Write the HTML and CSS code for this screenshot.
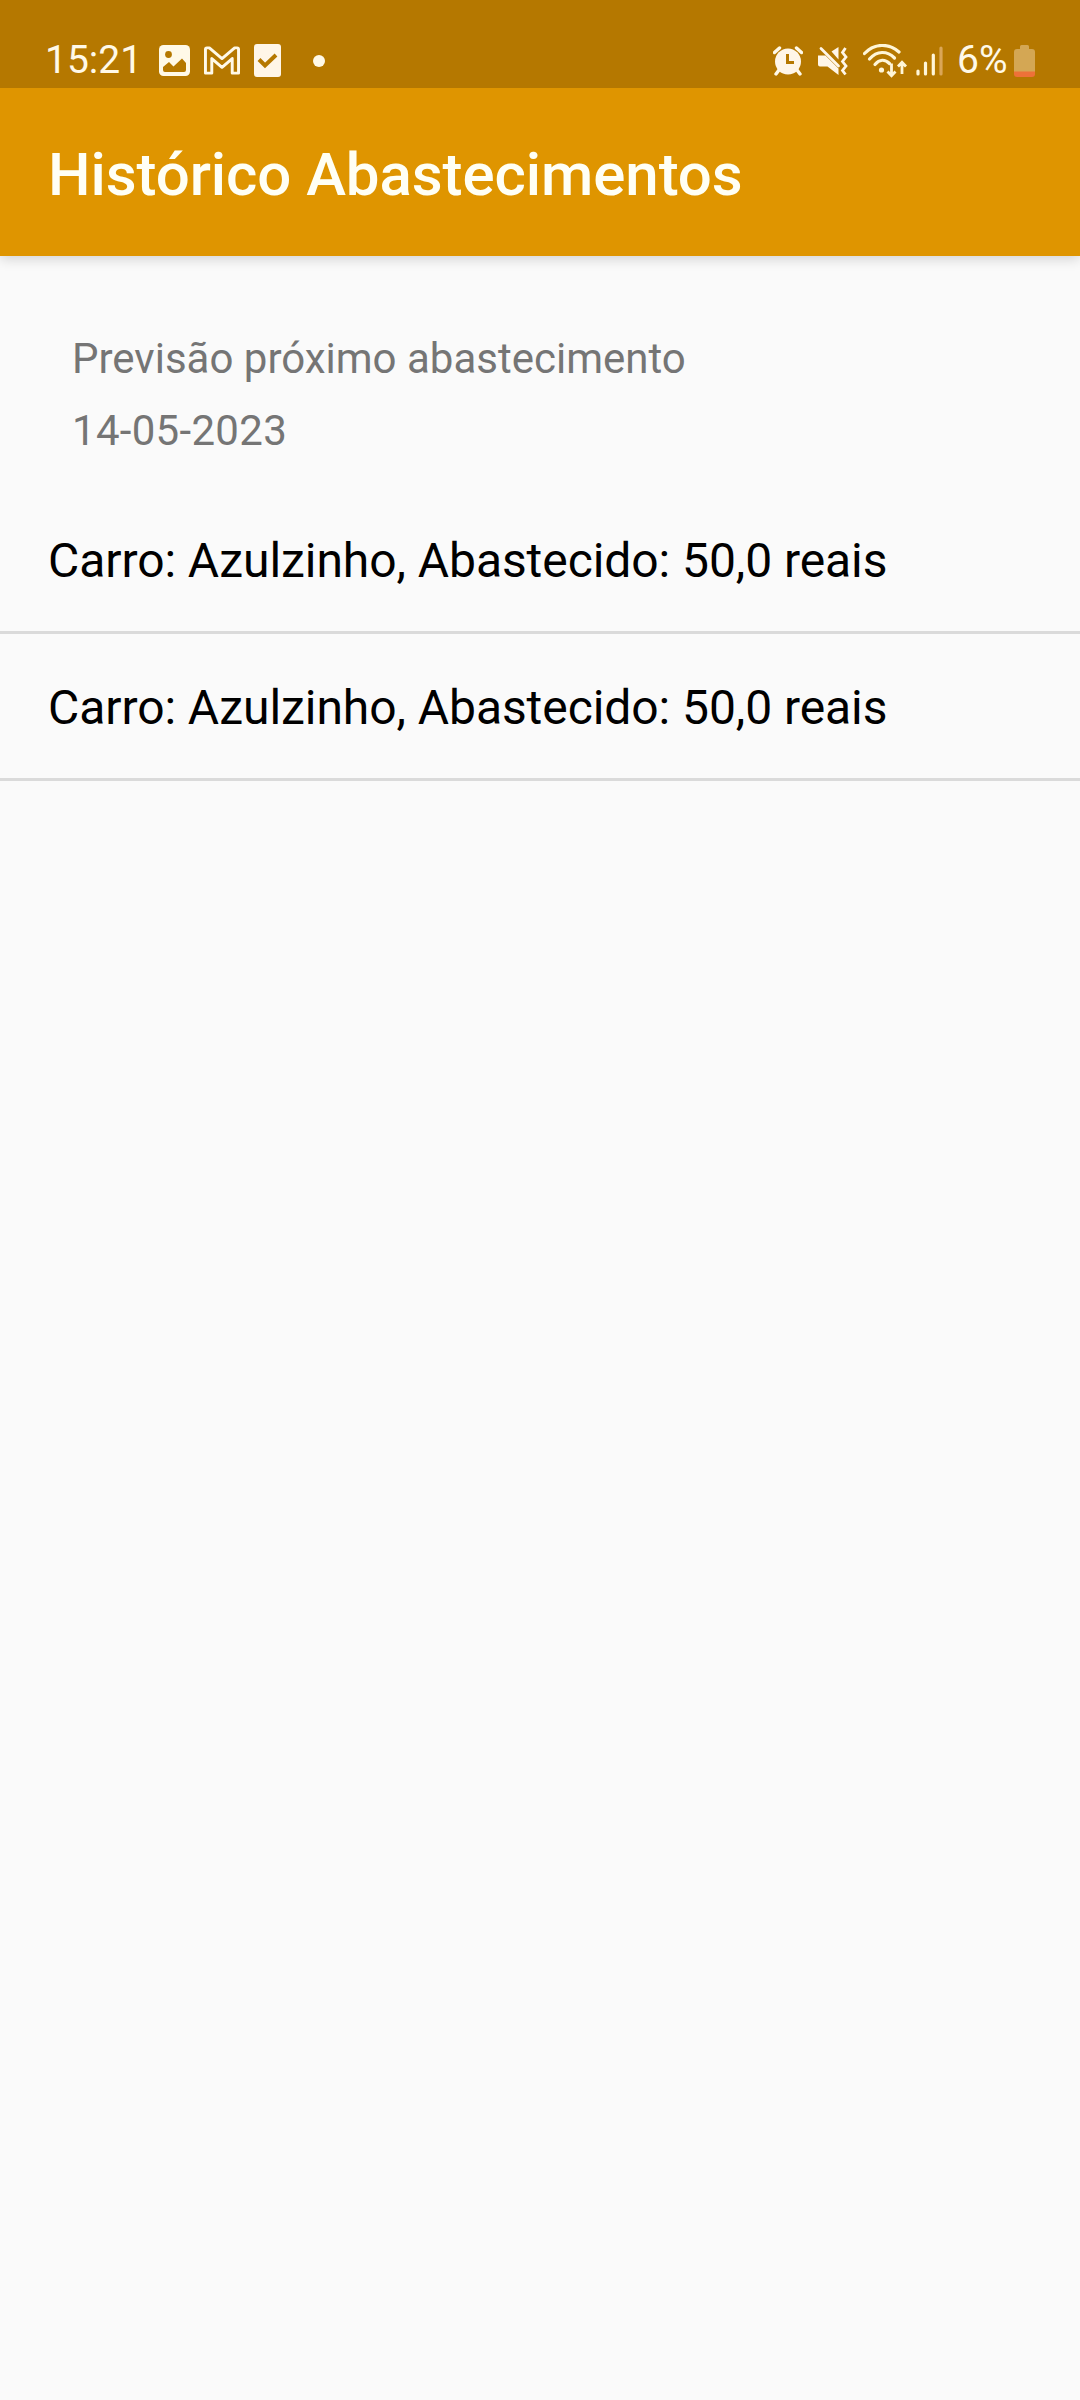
FILE: index.html
```
<!DOCTYPE html>
<html lang="pt-BR">

<head>
  <meta charset="utf-8">
  <title>Histórico Abastecimentos</title>
  <link rel="stylesheet" href="styles.css">
</head>

<body>
  <div class="status-bar">
    <span class="clock">15:21</span>
    <div class="notifications">
      <!-- gallery -->
      <svg width="31" height="31" viewBox="0 0 31 31">
        <rect width="31" height="31" rx="4.5" fill="#fff9e8"/>
        <circle cx="9.5" cy="9.5" r="3.4" fill="#b57800"/>
        <path d="M4 22L10 17l4.500 4.500 8.500-8L27 18v7q0 2-2 2H6q-2 0-2-2z" fill="#b57800"/>
      </svg>
      <!-- mail -->
      <svg width="36" height="29" viewBox="0 0 37 29">
        <path d="M1.500 3q0-1.500 1.500-1.500h2.500L18.500 12.500 31.500 1.500H34q1.500 0 1.500 1.500v24.500h-6.500V12.500L18.500 21.500 8 12.500v15H1.500z" fill="none" stroke="#fff9e8" stroke-width="3" stroke-linejoin="round"/>
      </svg>
      <!-- task -->
      <svg width="27" height="33" viewBox="0 0 27 33">
        <rect width="27" height="33" rx="3" fill="#fff6e8"/>
        <path d="M5 15.500l6 6L22 11" fill="none" stroke="#b57800" stroke-width="4"/>
      </svg>
    </div>
    <span class="more-dot"></span>
    <div class="system">
      <!-- alarm -->
      <svg width="30" height="30" viewBox="0 0 30 30">
        <path d="M1.500 6.500L6.500 2M28.500 6.500L23.500 2M6 24l-3 4M24 24l3 4" stroke="#fff9e8" stroke-width="3.400" stroke-linecap="round"/>
        <circle cx="15" cy="15.500" r="13" fill="#fff6e8"/>
        <path d="M14.500 8v8.500H21" fill="none" stroke="#b57800" stroke-width="3"/>
      </svg>
      <!-- vibrate / mute -->
      <svg width="30" height="30" viewBox="0 0 30 30">
        <path d="M0 9.500h7.500L20.500 22.500V29L9.500 20.500H2q-2 0-2-2zM13.500 5.500L20.500 1v12.500z" fill="#fff6e8"/>
        <path d="M3 2.500L20.500 20" stroke="#fff6e8" stroke-width="2.800" stroke-linecap="round"/>
        <path d="M27.500 2l-3 4.500 3.500 4.500-3.500 4.500 3.500 4.500-3.500 4.500 3 4" fill="none" stroke="#fff6e8" stroke-width="2.800"/>
      </svg>
      <!-- wifi -->
      <svg class="wifi" width="45" height="34" viewBox="0 0 45 34">
        <g fill="none" stroke="#fff6d8" stroke-width="3.200" stroke-linecap="round">
          <path d="M1.500 9.500C11.500-1 26-1 36 8"/>
          <path d="M6.500 15C14 6.500 24 6.500 31.500 14"/>
          <path d="M12 20.500C16.500 15 22 15 26.500 19.500"/>
        </g>
        <circle cx="18.500" cy="26" r="2.600" fill="#fff6d8"/>
        <path d="M28.500 19.500v11.500M24.500 27.500l4 4.200 4-4.200M39 30V19M35 22.500l4-4.200 4 4.200" fill="none" stroke="#fff6d8" stroke-width="2.800"/>
      </svg>
      <!-- signal -->
      <svg class="signal" width="28" height="30" viewBox="0 0 28 30">
        <path d="M2 25v3M9.500 17v11M17.300 9v19" stroke="#fff6d8" stroke-width="3.200" stroke-linecap="round"/>
        <path d="M25 2v26" stroke="#dba657" stroke-width="3.200" stroke-linecap="round"/>
      </svg>
      <span class="percent">6%</span>
      <!-- battery -->
      <svg class="battery" width="21" height="32" viewBox="0 0 21 32">
        <path d="M6 4V1.500Q6 0 7.500 0h6Q15 0 15 1.500V4h3q3 0 3 3v20H0V7q0-3 3-3z" fill="#d4a754"/>
        <path d="M0 26.500h21V29q0 3-3 3H3q-3 0-3-3z" fill="#ed7138"/>
      </svg>
    </div>
  </div>

  <header class="toolbar">
    <h1>Histórico Abastecimentos</h1>
  </header>

  <main>
    <div class="forecast">
      <p>Previsão próximo abastecimento</p>
      <p class="date">14-05-2023</p>
    </div>
    <ul class="history">
      <li>Carro: Azulzinho, Abastecido: 50,0 reais</li>
      <li>Carro: Azulzinho, Abastecido: 50,0 reais</li>
    </ul>
  </main>
</body>

</html>
```

FILE: styles.css
```
* {
  box-sizing: border-box;
}

body {
  margin: 0;
  min-height: 2400px;
  background: #fafafa;
  font-family: Roboto, "Liberation Sans", sans-serif;
}

h1,
p,
ul {
  margin: 0;
  padding: 0;
}

svg {
  display: block;
  flex: none;
}

/* status bar, kept above the toolbar shadow */
.status-bar {
  position: relative;
  z-index: 1;
  display: flex;
  align-items: center;
  height: 88px;
  padding: 33px 45px 0 45px;
  background: #b57800;
  color: #fff9e8;
  font-size: 39px;
  line-height: 55px;
}

.clock {
  width: 114px;
}

.notifications {
  display: flex;
  align-items: center;
  gap: 14px;
}

.more-dot {
  width: 12px;
  height: 12px;
  margin-left: 32px;
  border-radius: 50%;
  background: #fff9e8;
}

.system {
  display: flex;
  align-items: center;
  margin-left: auto;
  gap: 15px;
}

.wifi {
  margin-right: -7px;
}

.percent {
  width: 57px;
  margin-left: -2px;
  margin-right: -15px;
}

/* toolbar */
.toolbar {
  display: flex;
  align-items: center;
  height: 168px;
  padding: 6px 48px 0;
  background: #df9500;
  box-shadow: 0 3px 12px rgba(0, 0, 0, 0.16);
}

h1 {
  color: #fffff5;
  font-size: 60px;
  font-weight: 500;
  line-height: 72px;
  letter-spacing: -0.07px;
}

/* content */
.forecast {
  padding: 67px 72px 20px;
  color: #757575;
  font-size: 42px;
  line-height: 72px;
}

.date {
  letter-spacing: 0.3px;
}

.history {
  list-style: none;
}

.history li {
  height: 147px;
  padding: 2px 48px 0;
  border-bottom: 3px solid #dadada;
  color: #000;
  font-size: 48px;
  line-height: 144px;
  letter-spacing: -0.07px;
}
```
